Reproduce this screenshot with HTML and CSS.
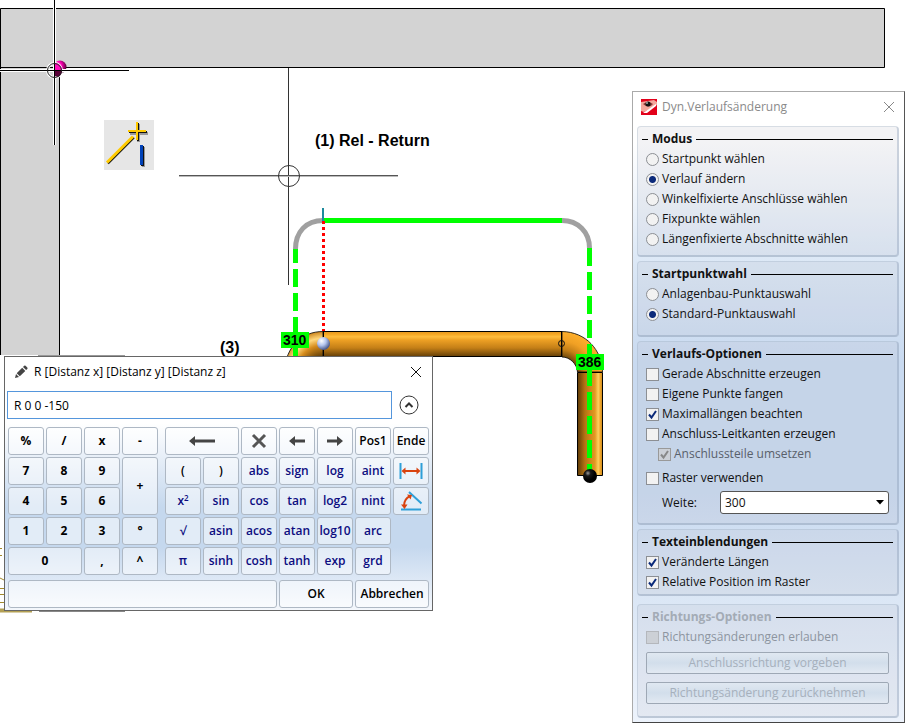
FILE: index.html
```html
<!DOCTYPE html>
<html lang="de">
<head>
<meta charset="utf-8">
<title>Dyn.Verlaufsänderung</title>
<link rel="stylesheet" href="styles.css">
</head>
<body>
<svg class="drawing" width="905" height="723" viewBox="0 0 905 723" aria-hidden="true">
  <defs>
    <linearGradient id="pipeH" x1="0" y1="0" x2="0" y2="1">
      <stop offset="0" stop-color="#e09420"/><stop offset=".12" stop-color="#f5a623"/><stop offset=".22" stop-color="#ffbd3c"/><stop offset=".35" stop-color="#eda024"/><stop offset=".65" stop-color="#c47f17"/><stop offset="1" stop-color="#5e3b06"/>
    </linearGradient>
    <linearGradient id="pipeV" x1="0" y1="0" x2="1" y2="0">
      <stop offset="0" stop-color="#5e3b06"/><stop offset=".3" stop-color="#b57314"/><stop offset=".7" stop-color="#e39a22"/><stop offset=".83" stop-color="#ffcf5c"/><stop offset=".92" stop-color="#eba32a"/><stop offset="1" stop-color="#c98a20"/>
    </linearGradient>
    <radialGradient id="bendR" gradientUnits="userSpaceOnUse" cx="562" cy="372" r="41">
      <stop offset=".35" stop-color="#6b450a"/><stop offset=".55" stop-color="#c47f17"/><stop offset=".75" stop-color="#f0a024"/><stop offset="1" stop-color="#ffb02c"/>
    </radialGradient>
    <radialGradient id="bendL" gradientUnits="userSpaceOnUse" cx="323" cy="372" r="41">
      <stop offset=".4" stop-color="#6b450a"/><stop offset=".65" stop-color="#d58b1b"/><stop offset=".82" stop-color="#ffd87c"/><stop offset="1" stop-color="#c98018"/>
    </radialGradient>
    <radialGradient id="ballBlue" cx=".35" cy=".3" r=".7">
      <stop offset="0" stop-color="#fff"/><stop offset=".5" stop-color="#b3c4ee"/><stop offset="1" stop-color="#4a598c"/>
    </radialGradient>
    <radialGradient id="ballBlack" cx=".35" cy=".3" r=".5">
      <stop offset="0" stop-color="#999"/><stop offset=".4" stop-color="#181818"/><stop offset="1" stop-color="#000"/>
    </radialGradient>
    <radialGradient id="ballPink" cx=".3" cy=".4" r=".75">
      <stop offset="0" stop-color="#ff7cf0"/><stop offset=".45" stop-color="#ff00b4"/><stop offset="1" stop-color="#3a0024"/>
    </radialGradient>
  </defs>

  <!-- walls -->
  <path d="M0 8H885V68H60V355H0Z" fill="#d3d3d3"/>
  <path d="M.5 355V8.500H884.500V67.500H0M59.500 68V355" fill="none" stroke="#000"/>
  <path d="M38 355.500H125" stroke="#999"/>

  <!-- cursor at wall corner -->
  <circle cx="60" cy="67" r="6.500" fill="url(#ballPink)"/>
  <path d="M54.500 0V145M0 70.500H129" stroke="#fff" stroke-width="3"/>
  <circle cx="54.500" cy="70.500" r="7" fill="none" stroke="#fff" stroke-width="3"/>
  <path d="M55 63a7 7 0 0 1 7 7h-7z" fill="#ff10bc"/>
  <path d="M55 71h7a7 7 0 0 1-4 6l-3-1z" fill="#5a0038"/>
  <path d="M54.500 0V145M0 70.500H129" stroke="#000"/>
  <circle cx="54.500" cy="70.500" r="7" fill="none" stroke="#222"/>

  <!-- line tool tile -->
  <path d="M104 120h50v50h-50z" fill="#e6e6e6"/>
  <g shape-rendering="crispEdges">
    <path d="M137 124h3v18h-3zM130 132h18v3h-18zM142 147h3v20h-3z" fill="#999"/>
    <path d="M137 123h2v18h-2zM129 131h18v2h-18zM141 146h3v20h-3z" fill="#111"/>
    <path d="M136 122h2v18h-2zM128 130h18v2h-18z" fill="#ffca00"/>
    <path d="M140 145h3v20h-3z" fill="#0042b8"/>
  </g>
  <path d="M108 163.500l26-26" stroke="#111" stroke-width="2"/>
  <path d="M107 162.500l26-26" stroke="#ffca00" stroke-width="3"/>

  <!-- main cursor -->
  <path d="M288.500 68V285" stroke="#333"/>
  <path d="M179 175.500H398" stroke="#555"/>
  <path d="M179 176.500H398" stroke="#bbb"/>
  <circle cx="289" cy="176" r="10.500" fill="none" stroke="#333"/>
  <text class="note" x="315" y="146">(1) Rel - Return</text>
  <text class="note" x="220" y="353">(3)</text>

  <!-- pipe -->
  <path d="M323 331.500C302 331.500 286 346 284 372H312L323 357Z" fill="url(#bendL)" stroke="#000" stroke-width=".8"/>
  <path d="M323 331h239v26H323z" fill="url(#pipeH)"/>
  <path d="M562 331.500C586 332 602 350 602.500 372H577.500C577 364 570 357 562 357Z" fill="url(#bendR)" stroke="#000" stroke-width=".8"/>
  <path d="M577.500 372.500h25v103h-25z" fill="url(#pipeV)" stroke="#000"/>
  <path d="M323 331.500H562M323 356.500H562M323.500 331v25M561.500 331v26" stroke="#000"/>
  <circle cx="561.500" cy="343.500" r="3" fill="none" stroke="#111"/>

  <!-- preview route -->
  <path d="M295.500 249C295.500 232 306 220.500 323 220.500M562 220.500C578 220.500 589.500 232 589.500 248" fill="none" stroke="#a0a0a0" stroke-width="5"/>
  <path d="M323 220.500H562" stroke="#0f0" stroke-width="5"/>
  <path d="M295.500 249v14M295.500 269v18M295.500 293v18M295.500 317v39" stroke="#0f0" stroke-width="5"/>
  <path d="M589.500 248v18M589.500 272v18M589.500 296v18M589.500 320v18M589.500 344v18M589.500 368v18M589.500 392v18M589.500 416v18M589.500 440v18M589.500 464v8" stroke="#0f0" stroke-width="5"/>
  <path d="M323.500 221V331" stroke="#f00" stroke-width="3" stroke-dasharray="3"/>
  <path d="M323 208v13" stroke="#1d8a9c" stroke-width="2"/>
  <circle cx="323.500" cy="343.500" r="6.500" fill="url(#ballBlue)"/>
  <circle cx="590" cy="476" r="7" fill="url(#ballBlack)"/>
  <path d="M281 332h28v16h-28zM576 354h28v16h-28z" fill="#0f0"/>
  <text class="dimension" x="283" y="345">310</text>
  <text class="dimension" x="578" y="367">386</text>

  <!-- parts that continue behind the windows -->
  <path d="M0 548.500h2M0 555.500h2M0 578l4 2M0 588.500h4M0 594.500h4M0 602.500h4" stroke="#a38a2c"/>
  <path d="M0 609.500h4M0 611.500h32" stroke="#b3a054" stroke-width="2"/>
  <path d="M39 611.500h86" stroke="#888"/>
  <path d="M904 166v5" stroke="#1fd01f" stroke-width="2"/>
</svg>

<main>
<form class="window calculator">
  <header class="titlebar">
    <svg width="14" height="14" viewBox="0 0 14 14" aria-hidden="true"><path d="M1 13l1-4 3 3zM2.700 8.200l5.500-5.400 3.100 3.100-5.500 5.400zM9 2l1.200-1.200q.7-.6 1.400 0l1.700 1.700q.6.7 0 1.400L12.100 5.100z" fill="#444"/></svg>
    <label for="entry">R [Distanz x] [Distanz y] [Distanz z]</label>
    <button type="button" class="close" aria-label="Schließen"><svg width="12" height="12" viewBox="0 0 12 12"><path d="M1 1l10 10M11 1L1 11" stroke="#111"/></svg></button>
  </header>
  <div class="entry-row">
    <input id="entry" class="entry" type="text" value="R 0 0 -150">
    <button type="button" class="collapse" aria-label="Einklappen"><svg width="20" height="20" viewBox="0 0 20 20"><circle cx="10" cy="10" r="9" fill="#fff" stroke="#333"/><path d="M6.500 12L10 8.500l3.500 3.500" fill="none" stroke="#333" stroke-width="2"/></svg></button>
  </div>
  <div class="pads">
    <div class="pad numbers">
      <button type="button">%</button><button type="button">/</button><button type="button">x</button><button type="button">-</button>
      <button type="button">7</button><button type="button">8</button><button type="button">9</button><button type="button" class="tall">+</button>
      <button type="button">4</button><button type="button">5</button><button type="button">6</button>
      <button type="button">1</button><button type="button">2</button><button type="button">3</button><button type="button">°</button>
      <button type="button" class="wide">0</button><button type="button">,</button><button type="button">^</button>
    </div>
    <div class="pad functions">
      <button type="button" class="wide" aria-label="Rücktaste"><svg width="26" height="12" viewBox="0 0 26 12"><path d="M0 6l6-5v3.500h20v3H6V11z" fill="#444"/></svg></button>
      <button type="button" aria-label="Löschen"><svg width="16" height="16" viewBox="0 0 16 16"><path d="M2 2l12 12M14 2L2 14" stroke="#555" stroke-width="3"/></svg></button>
      <button type="button" aria-label="Links"><svg width="16" height="12" viewBox="0 0 16 12"><path d="M0 6l6-5v3.500h10v3H6V11z" fill="#444"/></svg></button>
      <button type="button" aria-label="Rechts"><svg width="16" height="12" viewBox="0 0 16 12"><path d="M16 6l-6-5v3.500H0v3h10V11z" fill="#444"/></svg></button>
      <button type="button">Pos1</button><button type="button">Ende</button>
      <button type="button">(</button><button type="button">)</button><button type="button" class="fn">abs</button><button type="button" class="fn">sign</button><button type="button" class="fn">log</button><button type="button" class="fn">aint</button>
      <button type="button" aria-label="Abstand messen"><svg width="24" height="18" viewBox="0 0 24 18"><path d="M1.500 1v16M22.500 1v16" stroke="#2f9fd8" stroke-width="2"/><path d="M4 9h16" stroke="#d9430f" stroke-width="2"/><path d="M2.500 9l4-3.500v7zM21.500 9l-4-3.500v7z" fill="#d9430f"/></svg></button>
      <button type="button" class="fn">x<sup>2</sup></button><button type="button" class="fn">sin</button><button type="button" class="fn">cos</button><button type="button" class="fn">tan</button><button type="button" class="fn">log2</button><button type="button" class="fn">nint</button>
      <button type="button" aria-label="Winkel messen"><svg width="24" height="22" viewBox="0 0 24 22"><path d="M2 19.500h20M10 2l12.500 11.500" stroke="#2f9fd8" stroke-width="2"/><path d="M5 16Q5 9 11 6" fill="none" stroke="#d9430f" stroke-width="2"/><path d="M5.500 19l-3.500-4.500h6.500zM13 5l-5-.5 3.500 5z" fill="#d9430f"/></svg></button>
      <button type="button" class="fn">√</button><button type="button" class="fn">asin</button><button type="button" class="fn">acos</button><button type="button" class="fn">atan</button><button type="button" class="fn">log10</button><button type="button" class="fn row-end">arc</button>
      <button type="button" class="fn">π</button><button type="button" class="fn">sinh</button><button type="button" class="fn">cosh</button><button type="button" class="fn">tanh</button><button type="button" class="fn">exp</button><button type="button" class="fn">grd</button>
    </div>
  </div>
  <footer class="pad actions">
    <button type="button" aria-label="Status"></button><button type="button">OK</button><button type="button">Abbrechen</button>
  </footer>
</form>

<form class="window options">
  <header class="titlebar">
    <svg width="16" height="16" viewBox="0 0 16 16" aria-hidden="true"><path d="M0 0h16v16H0z" fill="#e2001a"/><path d="M0 3L13 1l3 2v3L3 13l-3-1z" fill="#f3a79c"/><path d="M2 14L15 5v2L6 14z" fill="#fff"/><path d="M2 5q5-4 10 0q-4 5-10 0z" fill="#8a3a38"/><circle cx="7" cy="5" r="2.500" fill="#111"/><circle cx="6" cy="4" r="1" fill="#aaa"/></svg>
    <span>Dyn.Verlaufsänderung</span>
    <button type="button" class="close" aria-label="Schließen"><svg width="12" height="12" viewBox="0 0 12 12"><path d="M1 1l10 10M11 1L1 11" stroke="#888"/></svg></button>
  </header>
  <div class="groups">
    <section class="group mode">
      <h2>Modus</h2>
      <label><input type="radio" name="mode">Startpunkt wählen</label>
      <label><input type="radio" name="mode" checked>Verlauf ändern</label>
      <label><input type="radio" name="mode">Winkelfixierte Anschlüsse wählen</label>
      <label><input type="radio" name="mode">Fixpunkte wählen</label>
      <label><input type="radio" name="mode">Längenfixierte Abschnitte wählen</label>
    </section>
    <section class="group start">
      <h2>Startpunktwahl</h2>
      <label><input type="radio" name="start">Anlagenbau-Punktauswahl</label>
      <label><input type="radio" name="start" checked>Standard-Punktauswahl</label>
    </section>
    <section class="group route">
      <h2>Verlaufs-Optionen</h2>
      <label><input type="checkbox">Gerade Abschnitte erzeugen</label>
      <label><input type="checkbox">Eigene Punkte fangen</label>
      <label><input type="checkbox" checked>Maximallängen beachten</label>
      <label><input type="checkbox">Anschluss-Leitkanten erzeugen</label>
      <label class="sub"><input type="checkbox" checked disabled>Anschlussteile umsetzen</label>
      <label class="raster"><input type="checkbox">Raster verwenden</label>
      <div class="field"><label for="width">Weite:</label><select id="width"><option>300</option></select></div>
    </section>
    <section class="group">
      <h2>Texteinblendungen</h2>
      <label><input type="checkbox" checked>Veränderte Längen</label>
      <label><input type="checkbox" checked>Relative Position im Raster</label>
    </section>
    <section class="group direction">
      <h2><span>Richtungs-Optionen</span></h2>
      <label><input type="checkbox" disabled>Richtungsänderungen erlauben</label>
      <button type="button" disabled>Anschlussrichtung vorgeben</button>
      <button type="button" disabled>Richtungsänderung zurücknehmen</button>
    </section>
  </div>
</form>
</main>
</body>
</html>
```

FILE: styles.css
```css
* { box-sizing: border-box; }

body {
  position: relative;
  min-height: 100vh;
  margin: 0;
  overflow: hidden;
  background: #fff;
  color: #000;
  font: 12px/20px "Open Sans", "Noto Sans", sans-serif;
}

button, input, select { margin: 0; padding: 0; font: inherit; color: inherit; }
svg { display: block; flex: none; }

.drawing { position: absolute; top: 0; left: 0; }
.note { font: bold 16px "Liberation Sans", sans-serif; }
.dimension { font: bold 14px "Liberation Sans", sans-serif; }

.window { position: absolute; border: 1px solid #666; background: #fff; }
.titlebar { display: flex; align-items: center; height: 30px; }
.close { margin-left: auto; border: 0; background: none; }

/* calculator window */
.calculator {
  top: 356px;
  left: 4px;
  padding: 0 3px 2px;
  background: linear-gradient(#fff 66px, #f5f8fc 80px, #c5d8ee 150px, #c5d8ee 190px, #dfe9f6 225px, #f4f7fc);
}
.calculator .titlebar { gap: 6px; padding: 0 8px 0 7px; }
.calculator .titlebar, .entry-row { margin: 0 -1px; }
.entry-row { display: flex; align-items: center; gap: 7px; padding: 4px 11px 7px 0; }
.entry { flex: 1; min-width: 0; height: 28px; padding: 0 6px; border: 1px solid #5596dc; background: #fff; outline: 0; }
.collapse { border: 0; background: none; }

.pads { display: flex; gap: 7px; padding-top: 1px; }
.pad { display: grid; gap: 2px; grid-auto-rows: 28px; }
.numbers { grid-template-columns: repeat(4, 36px); }
.functions { grid-template-columns: repeat(7, 36px); }
.actions { grid-template-columns: 1fr 74px 74px; margin-top: 5px; }
.pad button {
  display: flex;
  align-items: center;
  justify-content: center;
  border: 1px solid #aeb8c4;
  border-radius: 3px;
  background: rgba(255, 255, 255, .5);
  font-weight: 600;
  white-space: nowrap;
}
.numbers button { font-weight: 700; }
.pad .fn { color: #0c0c80; }
.wide { grid-column: span 2; }
.tall { grid-row: span 2; }
.functions .row-end + .fn { grid-column: 1; }
sup { font-size: 8px; line-height: 8px; align-self: flex-start; margin-top: 6px; }

/* options window */
.options {
  top: 91px;
  right: 0;
  width: 273px;
  padding: 0 5px 4px 4px;
  border-color: #aaa #555 #444 #aaa;
  background: linear-gradient(#fff 50px, #dce8f6 170px, #c9daf0 270px, #c9daf0 400px, #dae6f5 500px, #edf3fc);
  color: #111;
}
.options .titlebar { gap: 5px; padding: 0 4px; color: #8a8a8a; }
.groups { display: flex; flex-direction: column; gap: 4px; padding-top: 4px; }
.group {
  display: flex;
  flex-direction: column;
  padding: 2px 8px;
  border: 1px solid rgba(150, 170, 190, .3);
  border-bottom: 2px solid rgba(130, 150, 175, .4);
  border-right: 2px solid rgba(130, 150, 175, .35);
  border-radius: 4px;
  background: rgba(180, 180, 190, .16);
}
.group h2 { display: flex; align-items: center; gap: 4px; margin: 0 -4px; font: inherit; font-weight: 700; }
.group h2::before, .group h2::after { content: ""; height: 1px; background: #000; }
.group h2::before { width: 6px; }
.group h2::after { flex: 1; }
.group label { display: flex; align-items: center; gap: 3px; }
.mode { padding-bottom: 6px; }
.start { padding-bottom: 11px; }
.route { padding-bottom: 9px; }
.sub { margin-left: 12px; color: #59616b; }
.raster { margin-top: 4px; }

input[type="radio"], input[type="checkbox"] {
  appearance: none;
  width: 13px;
  height: 13px;
  border: 1px solid #8c8f94;
  background: #f2f2f2 center no-repeat;
}
input[type="radio"] { border-radius: 50%; }
input[type="radio"]:checked { background-image: radial-gradient(circle, #0b2a7a 3px, transparent 4px); }
input[type="checkbox"]:checked { background-image: url("data:image/svg+xml,%3Csvg xmlns='http://www.w3.org/2000/svg' width='11' height='11'%3E%3Cpath d='M2 5.500L4.500 8.500L9 2' fill='none' stroke='%230b2a7a' stroke-width='2'/%3E%3C/svg%3E"); }
input[type="checkbox"]:disabled { border-color: #b4b7bc; background-color: #ccd0d6; }
input[type="checkbox"]:disabled:checked { border-color: #999; background-image: url("data:image/svg+xml,%3Csvg xmlns='http://www.w3.org/2000/svg' width='11' height='11'%3E%3Cpath d='M2 5.500L4.500 8.500L9 2' fill='none' stroke='%23888' stroke-width='2'/%3E%3C/svg%3E"); }

.field { display: grid; grid-template-columns: 58px 1fr; margin: 3px 0 0 16px; }
.field select {
  appearance: none;
  height: 23px;
  padding: 0 4px;
  border: 1px solid #555;
  border-radius: 3px;
  background: #fff url("data:image/svg+xml,%3Csvg xmlns='http://www.w3.org/2000/svg' width='8' height='5'%3E%3Cpath d='M0 0h8L4 4.500z'/%3E%3C/svg%3E") right 4px center no-repeat;
}

.direction { margin-top: 4px; padding-bottom: 12px; color: #8d95a0; }
.direction h2 { color: #a3abb5; }
.direction button {
  height: 22px;
  margin-top: 8px;
  border: 1px solid #9ea8b5;
  border-radius: 2px;
  background: linear-gradient(#e0e8f1, #d2deeb 50%, #e2e9f2);
  color: #a6b0bc;
}
.direction label + button { margin-top: 5px; }
```
